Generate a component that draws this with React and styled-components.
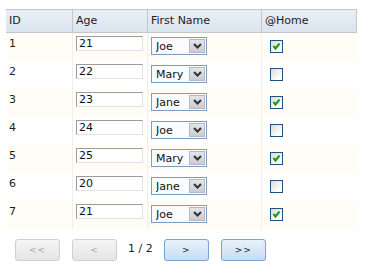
import React from "react"
import styled, { createGlobalStyle } from "styled-components"

const GlobalStyle = createGlobalStyle`
  body {
    margin: 0;
    background: #fff;
    font-family: "DejaVu Sans", Verdana, sans-serif;
    font-size: 11px;
    color: #1e1e1e;
  }
`

const Page = styled.div`
  padding: 9px 0 0 6px;
`

const Grid = styled.div`
  width: 351px;
`

const COLS = "67px 75px 114px 95px"

const HeaderRow = styled.div`
  display: grid;
  grid-template-columns: ${COLS};
  height: 22px;
  border-top: 1px solid #c3c7cc;
  border-bottom: 1px solid #c3c7cc;
  background: linear-gradient(to bottom, #e9eff6, #dbe4ee);
`

const HeadCell = styled.div`
  padding: 0 3px;
  line-height: 22px;
  border-right: 1px solid #c3c7cc;
  color: #222;
`

const Row = styled.div`
  display: grid;
  grid-template-columns: ${COLS};
  height: 28px;
  background: ${p => (p.odd ? "#fffdf6" : "#fff")};
`

const Cell = styled.div`
  padding: 3px 3px 0;
  line-height: 15px;
  border-right: 1px solid ${p => (p.last ? "transparent" : "#f1efe9")};
`

const SelectCell = styled(Cell)`
  padding-top: 4px;
`

const CheckCell = styled(Cell)`
  padding-top: 7px;
`

const AgeInput = styled.input`
  box-sizing: border-box;
  width: 67px;
  height: 15px;
  margin: 0;
  padding: 0 2px;
  border: 1px solid #e2e2e2;
  border-top-color: #9c9c9c;
  border-left-color: #9c9c9c;
  background: #fff;
  font-family: "DejaVu Sans", Verdana, sans-serif;
  font-size: 11px;
  color: #111;
  outline: none;
`

const SelectWrap = styled.div`
  position: relative;
  width: 56px;
  height: 18px;
`

const NameSelect = styled.select`
  appearance: none;
  box-sizing: border-box;
  width: 56px;
  height: 18px;
  margin: 0;
  padding: 0 0 0 4px;
  border: 1px solid #7f9db9;
  border-radius: 0;
  background: #f9fbff;
  font-family: "DejaVu Sans", Verdana, sans-serif;
  font-size: 11px;
  color: #111;
  outline: none;
`

const Arrow = styled.span`
  position: absolute;
  top: 2px;
  right: 2px;
  width: 16px;
  height: 14px;
  box-sizing: border-box;
  border: 1px solid #b5b9c4;
  background: linear-gradient(to bottom, #e4e5ec, #c9cbd6);
  display: flex;
  align-items: center;
  justify-content: center;
  pointer-events: none;
`

const Box = styled.span`
  display: block;
  box-sizing: border-box;
  width: 13px;
  height: 13px;
  margin-left: 5px;
  border: 1px solid #1c5180;
  background: linear-gradient(135deg, #dcdcd6, #fff 80%);
  position: relative;
`

const Pager = styled.div`
  display: flex;
  align-items: center;
  padding: 10px 0 0 9px;
`

const PageButton = styled.button`
  box-sizing: border-box;
  width: 45px;
  height: 22px;
  margin: 0 ${p => p.gap || 0}px 0 0;
  padding: 0;
  border-radius: 3px;
  font-family: "DejaVu Sans", Verdana, sans-serif;
  font-size: 9px;
  letter-spacing: 1px;
  border: 1px solid ${p => (p.disabled ? "#cfcfcf" : "#7fa3c8")};
  background: ${p =>
    p.disabled
      ? "linear-gradient(to bottom, #f5f5f5, #e5e5e5)"
      : "linear-gradient(to bottom, #e8f1fb, #c7ddf4)"};
  color: ${p => (p.disabled ? "#a8a8a8" : "#222")};
  box-shadow: ${p => (p.disabled ? "none" : "0 1px 1px rgba(0,0,0,0.15)")};
`

const PageInfo = styled.span`
  margin: -4px 11px 0 0;
  color: #222;
`

const rows = [
  { id: 1, age: 21, name: "Joe", home: true },
  { id: 2, age: 22, name: "Mary", home: false },
  { id: 3, age: 23, name: "Jane", home: true },
  { id: 4, age: 24, name: "Joe", home: false },
  { id: 5, age: 25, name: "Mary", home: true },
  { id: 6, age: 20, name: "Jane", home: false },
  { id: 7, age: 21, name: "Joe", home: true },
]

const Chevron = () => (
  <svg width="9" height="6" viewBox="0 0 9 6">
    <path d="M1 1 L4.5 4.5 L8 1" fill="none" stroke="#333" strokeWidth="2" />
  </svg>
)

const Check = ({ on }) => (
  <Box>
    {on && (
      <svg width="11" height="11" viewBox="0 0 11 11" style={{ position: "absolute", top: 0, left: 0 }}>
        <path d="M2.5 5 L4.5 7.5 L8.5 2.5" fill="none" stroke="#1f9e1f" strokeWidth="2.2" />
      </svg>
    )}
  </Box>
)

const App = () => (
  <Page>
    <GlobalStyle />
    <Grid>
      <HeaderRow>
        <HeadCell>ID</HeadCell>
        <HeadCell>Age</HeadCell>
        <HeadCell>First Name</HeadCell>
        <HeadCell>@Home</HeadCell>
      </HeaderRow>
      {rows.map((r, i) => (
        <Row key={r.id} odd={i % 2 === 0}>
          <Cell>{r.id}</Cell>
          <Cell>
            <AgeInput defaultValue={r.age} />
          </Cell>
          <SelectCell>
            <SelectWrap>
              <NameSelect defaultValue={r.name}>
                <option>Joe</option>
                <option>Mary</option>
                <option>Jane</option>
              </NameSelect>
              <Arrow>
                <Chevron />
              </Arrow>
            </SelectWrap>
          </SelectCell>
          <CheckCell last>
            <Check on={r.home} />
          </CheckCell>
        </Row>
      ))}
    </Grid>
    <Pager>
      <PageButton disabled gap={12}>&lt;&lt;</PageButton>
      <PageButton disabled gap={11}>&lt;</PageButton>
      <PageInfo>1 / 2</PageInfo>
      <PageButton gap={12}>&gt;</PageButton>
      <PageButton>&gt;&gt;</PageButton>
    </Pager>
  </Page>
)

export default App
